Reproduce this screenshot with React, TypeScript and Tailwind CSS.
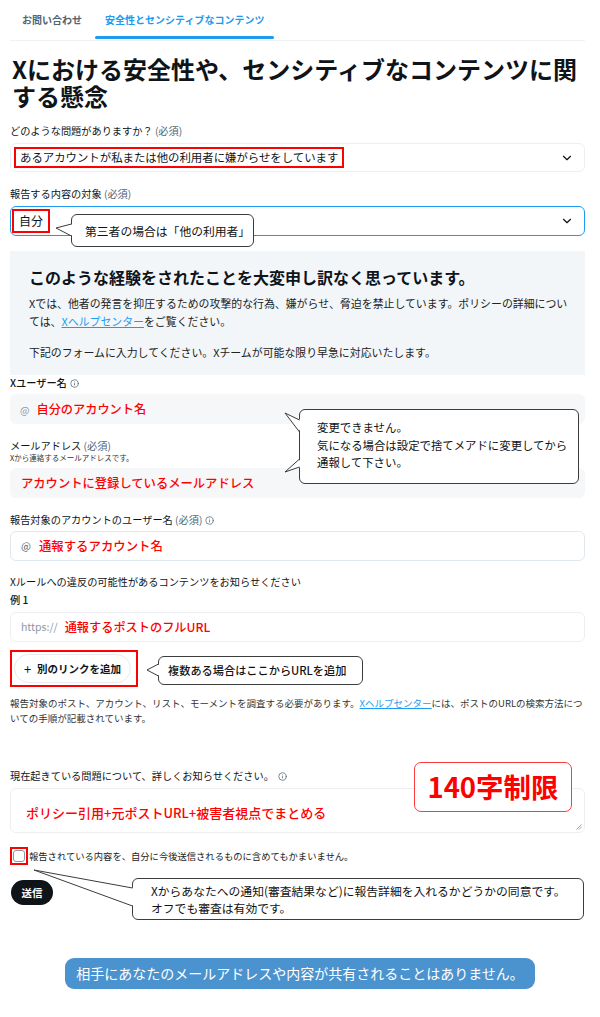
import { ChevronDown, Info } from "lucide-react";

function Label({ children }: { children: React.ReactNode }) {
  return <div className="text-[10.2px] leading-[14px] text-[#0f1419]">{children}</div>;
}

function Req() {
  return <span className="text-[#536471]"> (必須)</span>;
}

function Bubble({ className, children }: { className: string; children: React.ReactNode }) {
  return (
    <div className={`absolute bg-white border border-[#3c3c3c] rounded-[6px] text-[#111] ${className}`}>
      {children}
    </div>
  );
}

export default function App() {
  return (
    <div className="relative w-[600px] min-h-[1017px] bg-white font-['Noto_Sans_CJK_JP','Noto_Sans',sans-serif] text-[#0f1419]">
      {/* tabs */}
      <div className="ml-[10px] mr-[15px] h-[41px] flex border-b border-[#eff3f4]">
        <div className="px-[12px] pt-[13px] text-[10px] leading-[14px] font-bold text-[#536471]">お問い合わせ</div>
        <div className="relative ml-[1px] px-[10px] pt-[13px] text-[10px] leading-[14px] font-bold text-[#1d9bf0]">
          安全性とセンシティブなコンテンツ
          <div className="absolute left-0 right-0 bottom-[1px] h-[3px] rounded-full bg-[#1d9bf0]" />
        </div>
      </div>

      <div className="pl-[10px] pr-[15px]">
        <h1 className="mt-[14px] ml-[2px] text-[24px] leading-[27px] font-bold">
          Xにおける安全性や、センシティブなコンテンツに関する懸念
        </h1>

        <div className="mt-[15px]">
          <Label>どのような問題がありますか？<Req /></Label>
        </div>
        <div className="mt-[5px] h-[29px] flex items-center justify-between rounded-[6px] border border-[#eceff1] pl-[3px] pr-[10px]">
          <span className="border-2 border-[#ff0000] px-[4px] text-[11.4px] leading-[15px] py-[1px]">
            あるアカウントが私または他の利用者に嫌がらせをしています
          </span>
          <ChevronDown size={14} strokeWidth={2} className="text-[#0f1419]" />
        </div>

        <div className="mt-[15px]">
          <Label>報告する内容の対象<Req /></Label>
        </div>
        <div className="mt-[5px] h-[30px] flex items-center justify-between rounded-[6px] border-[1.5px] border-[#1d9bf0] pl-[1px] pr-[10px]">
          <span className="border-2 border-[#ff0000] px-[5px] text-[12px] leading-[16px] py-[2px]">自分</span>
          <ChevronDown size={14} strokeWidth={2} className="text-[#0f1419]" />
        </div>

        {/* info */}
        <div className="mt-[15px] bg-[#f3f6f9] pl-[19px] pr-[16px] pt-[15px] pb-[14px]">
          <div className="text-[16px] leading-[22px] font-bold">このような経験をされたことを大変申し訳なく思っています。</div>
          <p className="mt-[6px] text-[10.9px] leading-[18px] text-[#222]">
            Xでは、他者の発言を抑圧するための攻撃的な行為、嫌がらせ、脅迫を禁止しています。ポリシーの詳細については、
            <span className="text-[#1d9bf0] underline">Xヘルプセンター</span>をご覧ください。
          </p>
          <p className="mt-[13px] text-[10.9px] leading-[18px] text-[#222]">
            下記のフォームに入力してください。Xチームが可能な限り早急に対応いたします。
          </p>
        </div>

        <div className="mt-[1px] flex items-center gap-[3px]">
          <Label><span className="font-medium">Xユーザー名</span></Label>
          <Info size={9} strokeWidth={2} className="text-[#536471]" />
        </div>
        <div className="mt-[4px] h-[30px] flex items-center gap-[7px] rounded-[6px] bg-[#f5f7f9] pl-[10px]">
          <span className="text-[10px] text-[#8b98a5]">@</span>
          <span className="text-[12.2px] font-medium text-[#ff0000]">自分のアカウント名</span>
        </div>

        <div className="mt-[15px]">
          <Label>メールアドレス<Req /></Label>
          <div className="text-[7.5px] leading-[10px] text-[#333]">Xから連絡するメールアドレスです。</div>
        </div>
        <div className="mt-[5px] h-[30px] flex items-center rounded-[6px] bg-[#f5f7f9] pl-[11px]">
          <span className="text-[12.3px] font-medium text-[#ff0000]">アカウントに登録しているメールアドレス</span>
        </div>

        <div className="mt-[15px] flex items-center gap-[3px]">
          <Label>報告対象のアカウントのユーザー名<Req /></Label>
          <Info size={9} strokeWidth={2} className="text-[#536471]" />
        </div>
        <div className="mt-[4px] h-[30px] flex items-center gap-[8px] rounded-[6px] border border-[#e1e8ed] pl-[10px]">
          <span className="text-[10.5px] text-[#536471]">@</span>
          <span className="text-[12.4px] font-medium text-[#ff0000]">通報するアカウント名</span>
        </div>

        <div className="mt-[14px]">
          <Label>Xルールへの違反の可能性があるコンテンツをお知らせください</Label>
          <div className="mt-[4px] text-[10.2px] leading-[14px] font-medium">例 1</div>
        </div>
        <div className="mt-[5px] h-[30px] flex items-center gap-[7px] rounded-[6px] border border-[#eceff1] pl-[10px]">
          <span className="text-[10.5px] text-[#8b98a5]">https://</span>
          <span className="text-[12.2px] font-medium text-[#ff0000]">通報するポストのフルURL</span>
        </div>

        <div className="mt-[8px] w-[128px] border-2 border-[#ff0000] p-[2px]">
          <div className="h-[29px] w-[117px] flex items-center justify-center gap-[6px] rounded-full border border-[#e6eaed] text-[10.5px] font-bold">
            <span className="text-[13px] font-normal leading-none">+</span>
            別のリンクを追加
          </div>
        </div>

        <p className="mt-[9px] text-[9.5px] leading-[15px] text-[#333]">
          報告対象のポスト、アカウント、リスト、モーメントを調査する必要があります。
          <span className="text-[#1d9bf0] underline">Xヘルプセンター</span>
          には、ポストのURLの検索方法についての手順が記載されています。
        </p>

        <div className="mt-[43px] flex items-center gap-[4px]">
          <Label>現在起きている問題について、詳しくお知らせください。</Label>
          <Info size={9} strokeWidth={2} className="text-[#536471]" />
        </div>
        <div className="relative mt-[5px] h-[45px] rounded-[6px] border border-[#eceff1] pl-[15px] pt-[10px]">
          <span className="text-[13px] font-medium text-[#ff0000]">ポリシー引用+元ポストURL+被害者視点でまとめる</span>
          <svg className="absolute right-[2px] bottom-[2px]" width="6" height="6" viewBox="0 0 6 6">
            <path d="M5.5 0.5 L0.5 5.5 M5.5 3 L3 5.5" stroke="#888" strokeWidth="0.8" />
          </svg>
        </div>

        <div className="mt-[14px] flex items-center gap-[1px]">
          <div className="border-2 border-[#ff0000] p-[1px]">
            <div className="h-[12px] w-[12px] rounded-[3px] border border-[#8b98a5] bg-white" />
          </div>
          <span className="text-[9.3px] leading-[14px] text-[#222]">報告されている内容を、自分に今後送信されるものに含めてもかまいません。</span>
        </div>

        <div className="mt-[15px] ml-[1px] h-[25px] w-[42px] flex items-center justify-center rounded-full bg-[#0f1419] text-white text-[10.5px] font-bold">
          送信
        </div>

        <div className="mt-[53px] flex justify-center pl-[5px]">
          <div className="h-[31px] px-[11px] flex items-center rounded-[9px] bg-[#4b93cf] text-white text-[14px]">
            相手にあなたのメールアドレスや内容が共有されることはありません。
          </div>
        </div>
      </div>

      {/* annotations */}
      <Bubble className="left-[71px] top-[214px] w-[183px] h-[33px] flex items-center pl-[13px] text-[11.8px]">
        第三者の場合は「他の利用者」
      </Bubble>
      <Bubble className="left-[299px] top-[409px] w-[280px] h-[75px] pl-[17px] pt-[9px] text-[11.4px] leading-[17.5px]">
        変更できません。
        <br />
        気になる場合は設定で捨てメアドに変更してから
        <br />
        通報して下さい。
      </Bubble>
      <Bubble className="left-[158px] top-[656px] w-[205px] h-[29px] flex items-center pl-[9px] text-[11.2px] font-medium">
        複数ある場合はここからURLを追加
      </Bubble>
      <div className="absolute left-[414px] top-[762px] w-[158px] h-[50px] flex items-center justify-center rounded-[7px] border border-[#ff3b3b] bg-white text-[27.5px] font-bold text-[#ff0000]">
        140字制限
      </div>
      <Bubble className="left-[132px] top-[878px] w-[452px] h-[42px] pl-[18px] pt-[3px] text-[11.8px] leading-[17px]">
        Xからあなたへの通知(審査結果など)に報告詳細を入れるかどうかの同意です。
        <br />
        オフでも審査は有効です。
      </Bubble>

      <svg className="absolute inset-0 pointer-events-none" width="600" height="1017">
        <polygon points="73,224 56,228 73,236" fill="white" />
        <polyline points="71.5,224 56,228 71.5,236" fill="none" stroke="#3c3c3c" strokeWidth="1" />

        <polygon points="301,420 285,413 301,432" fill="white" />
        <polyline points="299.5,420 285,413 299.5,432" fill="none" stroke="#3c3c3c" strokeWidth="1" />
        <polygon points="301,459 285,472 301,467" fill="white" />
        <polyline points="299.5,459 285,472 299.5,467" fill="none" stroke="#3c3c3c" strokeWidth="1" />

        <polygon points="160,664 147,670 160,676" fill="white" />
        <polyline points="158.5,664 147,670 158.5,676" fill="none" stroke="#3c3c3c" strokeWidth="1" />

        <polygon points="134,888 34,870 134,906" fill="white" />
        <polyline points="132.5,888 34,870 132.5,906" fill="none" stroke="#3c3c3c" strokeWidth="1" />
      </svg>
    </div>
  );
}
